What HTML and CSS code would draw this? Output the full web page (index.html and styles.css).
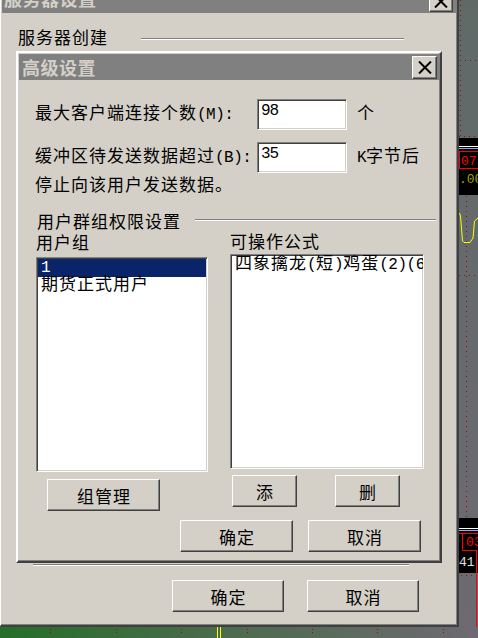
FILE: index.html
```html
<!DOCTYPE html>
<html lang="zh-CN">
<head>
<meta charset="utf-8">
<title>服务器设置</title>
<link rel="stylesheet" href="styles.css">
</head>
<body>
<div class="desktop">
  <svg class="chart" width="478" height="638" viewBox="0 0 478 638">
    <defs>
      <linearGradient id="gv" x1="0" y1="0" x2="0" y2="1">
        <stop offset="0" stop-color="#5f6a67"/>
        <stop offset="1" stop-color="#6d6a72"/>
      </linearGradient>
      <linearGradient id="gh" x1="0" y1="0" x2="1" y2="0">
        <stop offset="0" stop-color="#246f27"/>
        <stop offset="0.45" stop-color="#4b6b4d"/>
        <stop offset="1" stop-color="#6e6a72"/>
      </linearGradient>
    </defs>
    <rect x="0" y="0" width="478" height="638" fill="url(#gv)"/>
    <g stroke="#b00000" stroke-width="1" stroke-dasharray="1 4" fill="none">
      <line x1="460.5" y1="0" x2="460.5" y2="137"/>
      <line x1="460" y1="60.5" x2="478" y2="60.5"/>
      <line x1="459" y1="136.5" x2="478" y2="136.5"/>
      <line x1="466.5" y1="196" x2="466.5" y2="518"/>
      <line x1="459" y1="275.5" x2="478" y2="275.5"/>
      <line x1="461" y1="575.5" x2="478" y2="575.5"/>
    </g>
    <rect x="459" y="138" width="19" height="57" fill="#000"/>
    <line x1="459" y1="146.5" x2="478" y2="146.5" stroke="#fff"/>
    <line x1="459" y1="148.5" x2="478" y2="148.5" stroke="#9aa0ff"/>
    <rect x="459.5" y="151.5" width="19" height="17" fill="none" stroke="#f00"/>
    <text x="461" y="165" fill="#f00" font-family="Liberation Mono, monospace" font-size="13">07</text>
    <text x="459" y="183" fill="#a0a000" font-family="Liberation Mono, monospace" font-size="13">.00</text>
    <polyline points="459.5,213 460.5,216 462.5,241 464,242.5 470,242.5 473,238 474.5,221 478,218" fill="none" stroke="#ffff00" stroke-width="1"/>
    <rect x="459" y="518" width="19" height="55" fill="#000"/>
    <line x1="459" y1="528.5" x2="478" y2="528.5" stroke="#fff"/>
    <line x1="459" y1="530.5" x2="478" y2="530.5" stroke="#9aa0ff"/>
    <line x1="459" y1="533.5" x2="478" y2="533.5" stroke="#f00"/>
    <line x1="462.5" y1="533" x2="462.5" y2="550" stroke="#f00"/>
    <line x1="462" y1="550.5" x2="477" y2="550.5" stroke="#f00"/>
    <line x1="476.5" y1="550" x2="476.5" y2="638" stroke="#f00"/>
    <text x="466" y="546" fill="#f00" font-family="Liberation Mono, monospace" font-size="13">03</text>
    <text x="459" y="566" fill="#e0e0e0" font-family="Liberation Mono, monospace" font-size="13">41</text>
    <rect x="0" y="627" width="478" height="11" fill="url(#gh)"/>
    <g stroke="#b00000" stroke-width="1" stroke-dasharray="1 2">
      <line x1="50.5" y1="629" x2="50.5" y2="635"/>
      <line x1="116.5" y1="629" x2="116.5" y2="635"/>
      <line x1="181.5" y1="629" x2="181.5" y2="635"/>
      <line x1="247.5" y1="629" x2="247.5" y2="635"/>
      <line x1="312.5" y1="629" x2="312.5" y2="635"/>
      <line x1="377.5" y1="629" x2="377.5" y2="635"/>
      <line x1="443.5" y1="629" x2="443.5" y2="635"/>
    </g>
    <line x1="217.5" y1="627" x2="217.5" y2="638" stroke="#ffff00"/>
    <line x1="220.5" y1="627" x2="220.5" y2="638" stroke="#ffff00"/>
  </svg>

  <div class="win outer">
    <div class="titlebar outer-title">
      <span class="title-text">服务器设置</span>
      <span class="close-btn"><svg width="14" height="13" viewBox="0 0 14 13"><path d="M1 0.5L13 12.5M13 0.5L1 12.5" stroke="#000" stroke-width="2" fill="none"/></svg></span>
    </div>
    <div class="client">
      <div class="grp-head server-head">
        <span class="grp-label server-label">服务器创建</span>
        <span class="etch server-line"></span>
      </div>
      <div class="grp-body"></div>
      <div class="etch grp-bottom"></div>
      <div class="btn-row outer-btns">
        <button class="btn btn-wide2">确定</button>
        <button class="btn btn-wide2">取消</button>
      </div>
    </div>
  </div>

  <div class="win inner">
    <div class="titlebar inner-title">
      <span class="title-text">高级设置</span>
      <span class="close-btn big"><svg width="14" height="13" viewBox="0 0 14 13"><path d="M1 0.5L13 12.5M13 0.5L1 12.5" stroke="#000" stroke-width="2" fill="none"/></svg></span>
    </div>
    <div class="client">
      <div class="form-row row1">
        <span class="form-label">最大客户端连接个数<span class="lat">(M):</span></span>
        <span class="field">98</span>
        <span class="unit">个</span>
      </div>
      <div class="form-row row2">
        <span class="form-label">缓冲区待发送数据超过<span class="lat">(B):</span></span>
        <span class="field">35</span>
        <span class="unit"><span class="lat">K</span>字节后</span>
      </div>
      <div class="note">停止向该用户发送数据。</div>
      <div class="grp-head perm-head">
        <span class="grp-label perm-label">用户群组权限设置</span>
        <span class="etch perm-line"></span>
      </div>
      <div class="cols">
        <div class="col col-left">
          <div class="col-label">用户组</div>
          <div class="list">
            <div class="item sel"><span class="lat">1</span></div>
            <div class="item">期货正式用户</div>
          </div>
          <button class="btn btn-group">组管理</button>
        </div>
        <div class="col col-right">
          <div class="col-label">可操作公式</div>
          <div class="list">
            <div class="item">四象擒龙<span class="lat">(</span>短<span class="lat">)</span>鸡蛋<span class="lat">(2)(6)</span></div>
          </div>
          <div class="btn-pair">
            <button class="btn btn-small">添</button>
            <button class="btn btn-small">删</button>
          </div>
        </div>
      </div>
      <div class="btn-row inner-btns">
        <button class="btn btn-wide">确定</button>
        <button class="btn btn-wide">取消</button>
      </div>
    </div>
  </div>
</div>
</body>
</html>
```
FILE: styles.css
```css
* { box-sizing: border-box; }
html, body { margin: 0; padding: 0; }
body {
  width: 478px;
  height: 638px;
  overflow: hidden;
  font-family: "Liberation Mono", "Noto Sans CJK SC", monospace;
  font-size: 17px;
  letter-spacing: 1px;
  color: #000;
  background: #646a6c;
}
.lat { font-size: 16px; letter-spacing: -0.5px; }
.desktop { position: relative; width: 478px; height: 638px; overflow: hidden; }
.chart { position: absolute; left: 0; top: 0; display: block; letter-spacing: 0; }

.win {
  position: absolute;
  display: flex;
  flex-direction: column;
  background: #d4d0c8;
  border: 2px solid;
  border-color: #fff #404040 #404040 #fff;
  box-shadow: inset -1px -1px 0 #808080;
  padding: 1px;
}
.outer { left: -1px; top: -14px; width: 460px; height: 641px; }
.inner { left: 16px; top: 51px; width: 426px; height: 512px; }

.titlebar {
  flex: none;
  display: flex;
  align-items: center;
  justify-content: space-between;
  background: #808080;
}
.outer-title { height: 24px; padding: 0 3px 0 2px; }
.inner-title { height: 26px; padding: 0 2px 0 3px; }
.title-text {
  font-family: "Noto Sans CJK SC", sans-serif;
  font-weight: bold;
  font-size: 18px;
  line-height: 20px;
  color: #d4d0c8;
  letter-spacing: 0.5px;
}
.outer-title .title-text { margin-bottom: 6px; }

.close-btn {
  display: flex;
  align-items: center;
  justify-content: center;
  width: 24px;
  height: 21px;
  background: #d4d0c8;
  border: 1px solid;
  border-color: #fff #404040 #404040 #fff;
  box-shadow: inset -1px -1px 0 #808080;
}
.close-btn.big { width: 25px; height: 23px; }
.close-btn svg { display: block; }

.client { flex: 1; display: flex; flex-direction: column; }

.etch {
  display: block;
  height: 2px;
  border-top: 1px solid #808080;
  border-bottom: 1px solid #fff;
}
.grp-head { display: flex; height: 20px; flex: none; }
.grp-label { line-height: 20px; white-space: nowrap; }

.server-head { margin-top: 17px; padding-left: 16px; }
.server-label { width: 123px; }
.server-line { width: 263px; margin-top: 8px; }
.grp-body { height: 514px; flex: none; }
.grp-bottom { margin-left: 31px; width: 376px; flex: none; }

.btn-row { display: flex; flex: none; }
.outer-btns { margin-top: 14px; padding-left: 170px; gap: 23px; }
.inner-btns { margin-top: 9px; padding-left: 161px; gap: 15px; }

.btn {
  display: flex;
  align-items: center;
  justify-content: center;
  height: 32px;
  margin: 0;
  padding: 0 0 0 1px;
  font: inherit;
  letter-spacing: 1px;
  color: #000;
  background: #d4d0c8;
  border: 1px solid;
  border-color: #fff #404040 #404040 #fff;
  box-shadow: inset -1px -1px 0 #808080;
  border-radius: 0;
}
.btn-wide { width: 113px; }
.btn-wide2 { width: 112px; }
.btn-group { width: 113px; margin-top: 7px; margin-left: 11px; }
.btn-small { width: 65px; }

.form-row { display: flex; align-items: center; padding-left: 16px; flex: none; }
.row1 { margin-top: 19px; }
.row2 { margin-top: 12px; }
.form-label { width: 222px; line-height: 20px; white-space: nowrap; }
.field {
  display: block;
  width: 90px;
  height: 31px;
  background: #fff;
  border: 1px solid;
  border-color: #808080 #fff #fff #808080;
  box-shadow: inset 1px 1px 0 #404040, inset -1px -1px 0 #d4d0c8;
  padding: 2px 0 0 3px;
  font-size: 16px;
  line-height: 18px;
  letter-spacing: -1px;
}
.unit { margin-left: 10px; line-height: 20px; }
.note { margin-top: 4px; padding-left: 16px; line-height: 20px; flex: none; }

.perm-head { margin-top: 17px; padding-left: 18px; }
.perm-label { width: 158px; }
.perm-line { width: 241px; margin-top: 5px; }

.cols { display: flex; padding-left: 17px; flex: none; }
.col { display: flex; flex-direction: column; }
.col-left { width: 172px; }
.col-right { width: 194px; margin-left: 22px; }
.col-label { line-height: 20px; }
.col-left .col-label { margin-top: 1px; }

.list {
  height: 215px;
  background: #fff;
  border: 1px solid;
  border-color: #808080 #fff #fff #808080;
  box-shadow: inset 1px 1px 0 #404040, inset -1px -1px 0 #d4d0c8;
  padding: 1px;
  overflow: hidden;
}
.col-left .list { margin-top: 2px; }
.item { height: 18px; line-height: 18px; padding-left: 3px; white-space: nowrap; }
.item.sel { background: #0a246a; color: #fff; }

.btn-pair { display: flex; margin-top: 6px; padding-left: 2px; gap: 38px; }
```
